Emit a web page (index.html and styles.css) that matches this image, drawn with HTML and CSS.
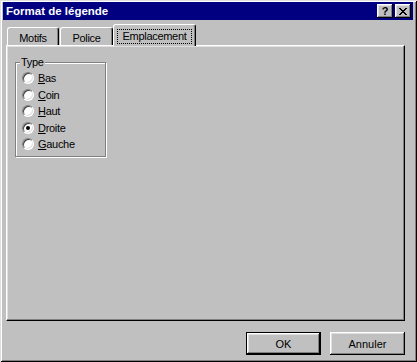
FILE: index.html
```html
<!DOCTYPE html>
<html>
<head>
	<title>Format de légende</title>
	<meta charset="utf-8">
	<link rel="stylesheet" href="styles.css">
</head>
<body>
	<!--Dialog window-->
	<div class="window">
		<!--Title bar with help and close buttons-->
		<div class="titlebar">
			<span class="title">Format de légende</span>
			<div class="tbtns">
				<span class="tbtn">?</span>
				<span class="tbtn">
					<svg width="8" height="7" viewBox="0 0 8 7">
						<rect x="0" y="0" width="2" height="1"/><rect x="6" y="0" width="2" height="1"/>
						<rect x="1" y="1" width="2" height="1"/><rect x="5" y="1" width="2" height="1"/>
						<rect x="2" y="2" width="4" height="1"/>
						<rect x="3" y="3" width="2" height="1"/>
						<rect x="2" y="4" width="4" height="1"/>
						<rect x="1" y="5" width="2" height="1"/><rect x="5" y="5" width="2" height="1"/>
						<rect x="0" y="6" width="2" height="1"/><rect x="6" y="6" width="2" height="1"/>
					</svg>
				</span>
			</div>
		</div>

		<div class="content">
			<!--Tabs-->
			<div class="tabs">
				<div class="tab tab-motifs">Motifs</div>
				<div class="tab tab-police">Police</div>
				<div class="tab active"><span class="focus">Emplacement</span></div>
			</div>

			<!--Tab page-->
			<div class="panel">
				<div class="group">
					<div class="group-label">Type</div>
					<div class="radios">
						<div class="radio"><span class="dot"></span><span><u>B</u>as</span></div>
						<div class="radio"><span class="dot"></span><span><u>C</u>oin</span></div>
						<div class="radio"><span class="dot"></span><span><u>H</u>aut</span></div>
						<div class="radio"><span class="dot checked"></span><span><u>D</u>roite</span></div>
						<div class="radio"><span class="dot"></span><span><u>G</u>auche</span></div>
					</div>
				</div>
			</div>

			<!--Dialog buttons-->
			<div class="actions">
				<button class="btn default">OK</button>
				<button class="btn">Annuler</button>
			</div>
		</div>
	</div>
</body>
</html>
```
FILE: styles.css
```css
*{
	box-sizing: border-box;
}

body{
	margin: 0;
	background: #c0c0c0;
	font-family: "Liberation Sans", Arial, sans-serif;
	font-size: 11px;
	letter-spacing: -0.3px;
	color: #000;
}

.window{
	width: 417px;
	height: 362px;
	padding: 2px 4px 0 3px;
	background: #c0c0c0;
	box-shadow: inset 1px 1px #dfdfdf, inset -1px -1px #000, inset 2px 2px #fff, inset -2px -2px #808080;
}

.titlebar{
	height: 18px;
	display: flex;
	align-items: center;
	padding: 0 2px 0 3px;
	background: #000080;
	color: #fff;
}

.title{
	flex: 1;
	font-weight: bold;
	font-size: 11.5px;
	letter-spacing: 0;
}

.tbtns{
	display: flex;
	gap: 2px;
}

.tbtn{
	width: 16px;
	height: 14px;
	display: flex;
	align-items: center;
	justify-content: center;
	background: #c0c0c0;
	color: #000;
	font-weight: bold;
	font-size: 11px;
	line-height: 14px;
	box-shadow: inset -1px -1px #000, inset 1px 1px #fff, inset -2px -2px #808080, inset 2px 2px #dfdfdf;
}

.tbtn svg{
	fill: #000;
}

.content{
	padding: 4px 0 0 3px;
}

.tabs{
	height: 21px;
	display: flex;
	align-items: flex-end;
	padding-left: 1px;
}

.tab{
	height: 18px;
	padding-top: 4px;
	line-height: 13px;
	text-align: center;
	background: #c0c0c0;
	border: 1px solid #fff;
	border-bottom: none;
	border-right-color: #000;
	border-radius: 3px 3px 0 0;
	box-shadow: inset -1px 0 #808080;
}

.tab-motifs{
	width: 52px;
	margin-right: 1px;
}

.tab-police{
	width: 53px;
}

.tab.active{
	position: relative;
	z-index: 1;
	width: 83px;
	height: 22px;
	margin-bottom: -1px;
}

.focus{
	display: inline-block;
	padding: 0 5px;
	line-height: 13px;
	border: 1px dotted #000;
}

.panel{
	width: 399px;
	height: 276px;
	padding: 16px 0 0 8px;
	border: 1px solid;
	border-color: #fff #000 #000 #fff;
	box-shadow: inset -1px -1px #808080, inset 1px 1px #dfdfdf;
}

.group{
	width: 91px;
	height: 95px;
	border: 1px solid #808080;
	box-shadow: inset 1px 1px #fff, 1px 1px #fff;
}

.group-label{
	width: fit-content;
	margin: -7px 0 0 4px;
	padding: 0 1px;
	line-height: 13px;
	background: #c0c0c0;
}

.radios{
	margin-top: 1px;
}

.radio{
	height: 16.5px;
	display: flex;
	align-items: center;
	gap: 4px;
	padding-left: 6px;
}

.dot{
	width: 12px;
	height: 12px;
	display: flex;
	align-items: center;
	justify-content: center;
	border-radius: 50%;
	border: 1px solid;
	border-color: #808080 #fff #fff #808080;
	background: #fff;
	box-shadow: inset 1px 1px #404040, inset -1px -1px #dfdfdf;
}

.dot.checked::after{
	content: "";
	width: 4px;
	height: 4px;
	border-radius: 50%;
	background: #000;
}

.actions{
	width: 399px;
	margin-top: 11px;
	display: flex;
	justify-content: flex-end;
	gap: 9px;
}

.btn{
	width: 75px;
	height: 23px;
	padding: 0;
	border: none;
	background: #c0c0c0;
	font: inherit;
	color: #000;
	box-shadow: inset -1px -1px #000, inset 1px 1px #fff, inset -2px -2px #808080, inset 2px 2px #dfdfdf;
}

.btn.default{
	border: 1px solid #000;
}
```
